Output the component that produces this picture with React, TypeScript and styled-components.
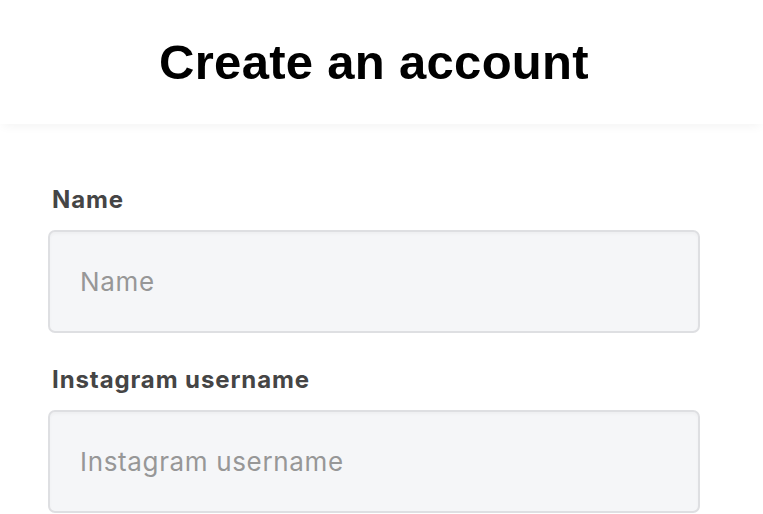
import React from "react";
import styled, { createGlobalStyle } from "styled-components";

const GlobalStyle = createGlobalStyle`
  html, body { margin: 0; padding: 0; background: #ffffff; }
  body { font-family: Inter, "Liberation Sans", Arial, sans-serif; }
  * { box-sizing: border-box; }
`;

const Page = styled.div`
  width: 100%;
  display: flex;
  flex-direction: column;
`;

const Header = styled.header`
  height: 124px;
  display: flex;
  justify-content: center;
  align-items: flex-start;
  padding: 34px 15px 0 0;
  background: #ffffff;
  box-shadow: 0 5px 10px -3px rgba(0, 0, 0, 0.05);
  position: relative;
  z-index: 1;
`;

const Title = styled.h1`
  margin: 0;
  font-family: "Liberation Sans", Arial, sans-serif;
  font-weight: 700;
  font-size: 49px;
  line-height: 56px;
  color: #000000;
  letter-spacing: 0.3px;
`;

const Form = styled.form`
  display: flex;
  flex-direction: column;
  padding: 62px 63px 0 48px;
  gap: 33px;
`;

const Field = styled.div`
  display: flex;
  flex-direction: column;
  gap: 16px;
`;

const Label = styled.label`
  padding-left: 4px;
  font-family: Inter, "Liberation Sans", Arial, sans-serif;
  font-weight: 700;
  font-size: 24px;
  line-height: 28px;
  letter-spacing: 0.9px;
  color: #454545;
`;

const Input = styled.input`
  width: 100%;
  height: 103px;
  padding: 0 30px;
  border: 2px solid #dedfe2;
  border-radius: 7px;
  background: #f5f6f8;
  box-shadow: inset 0 2px 3px rgba(0, 0, 0, 0.03);
  font-family: Inter, "Liberation Sans", Arial, sans-serif;
  font-size: 26px;
  letter-spacing: 0.65px;
  color: #333333;
  outline: none;

  &::placeholder {
    color: #979797;
  }
`;

export default function App() {
  return (
    <>
      <GlobalStyle />
      <Page>
        <Header>
          <Title>Create an account</Title>
        </Header>
        <Form>
          <Field>
            <Label htmlFor="name">Name</Label>
            <Input id="name" placeholder="Name" />
          </Field>
          <Field>
            <Label htmlFor="ig">Instagram username</Label>
            <Input id="ig" placeholder="Instagram username" />
          </Field>
        </Form>
      </Page>
    </>
  );
}
